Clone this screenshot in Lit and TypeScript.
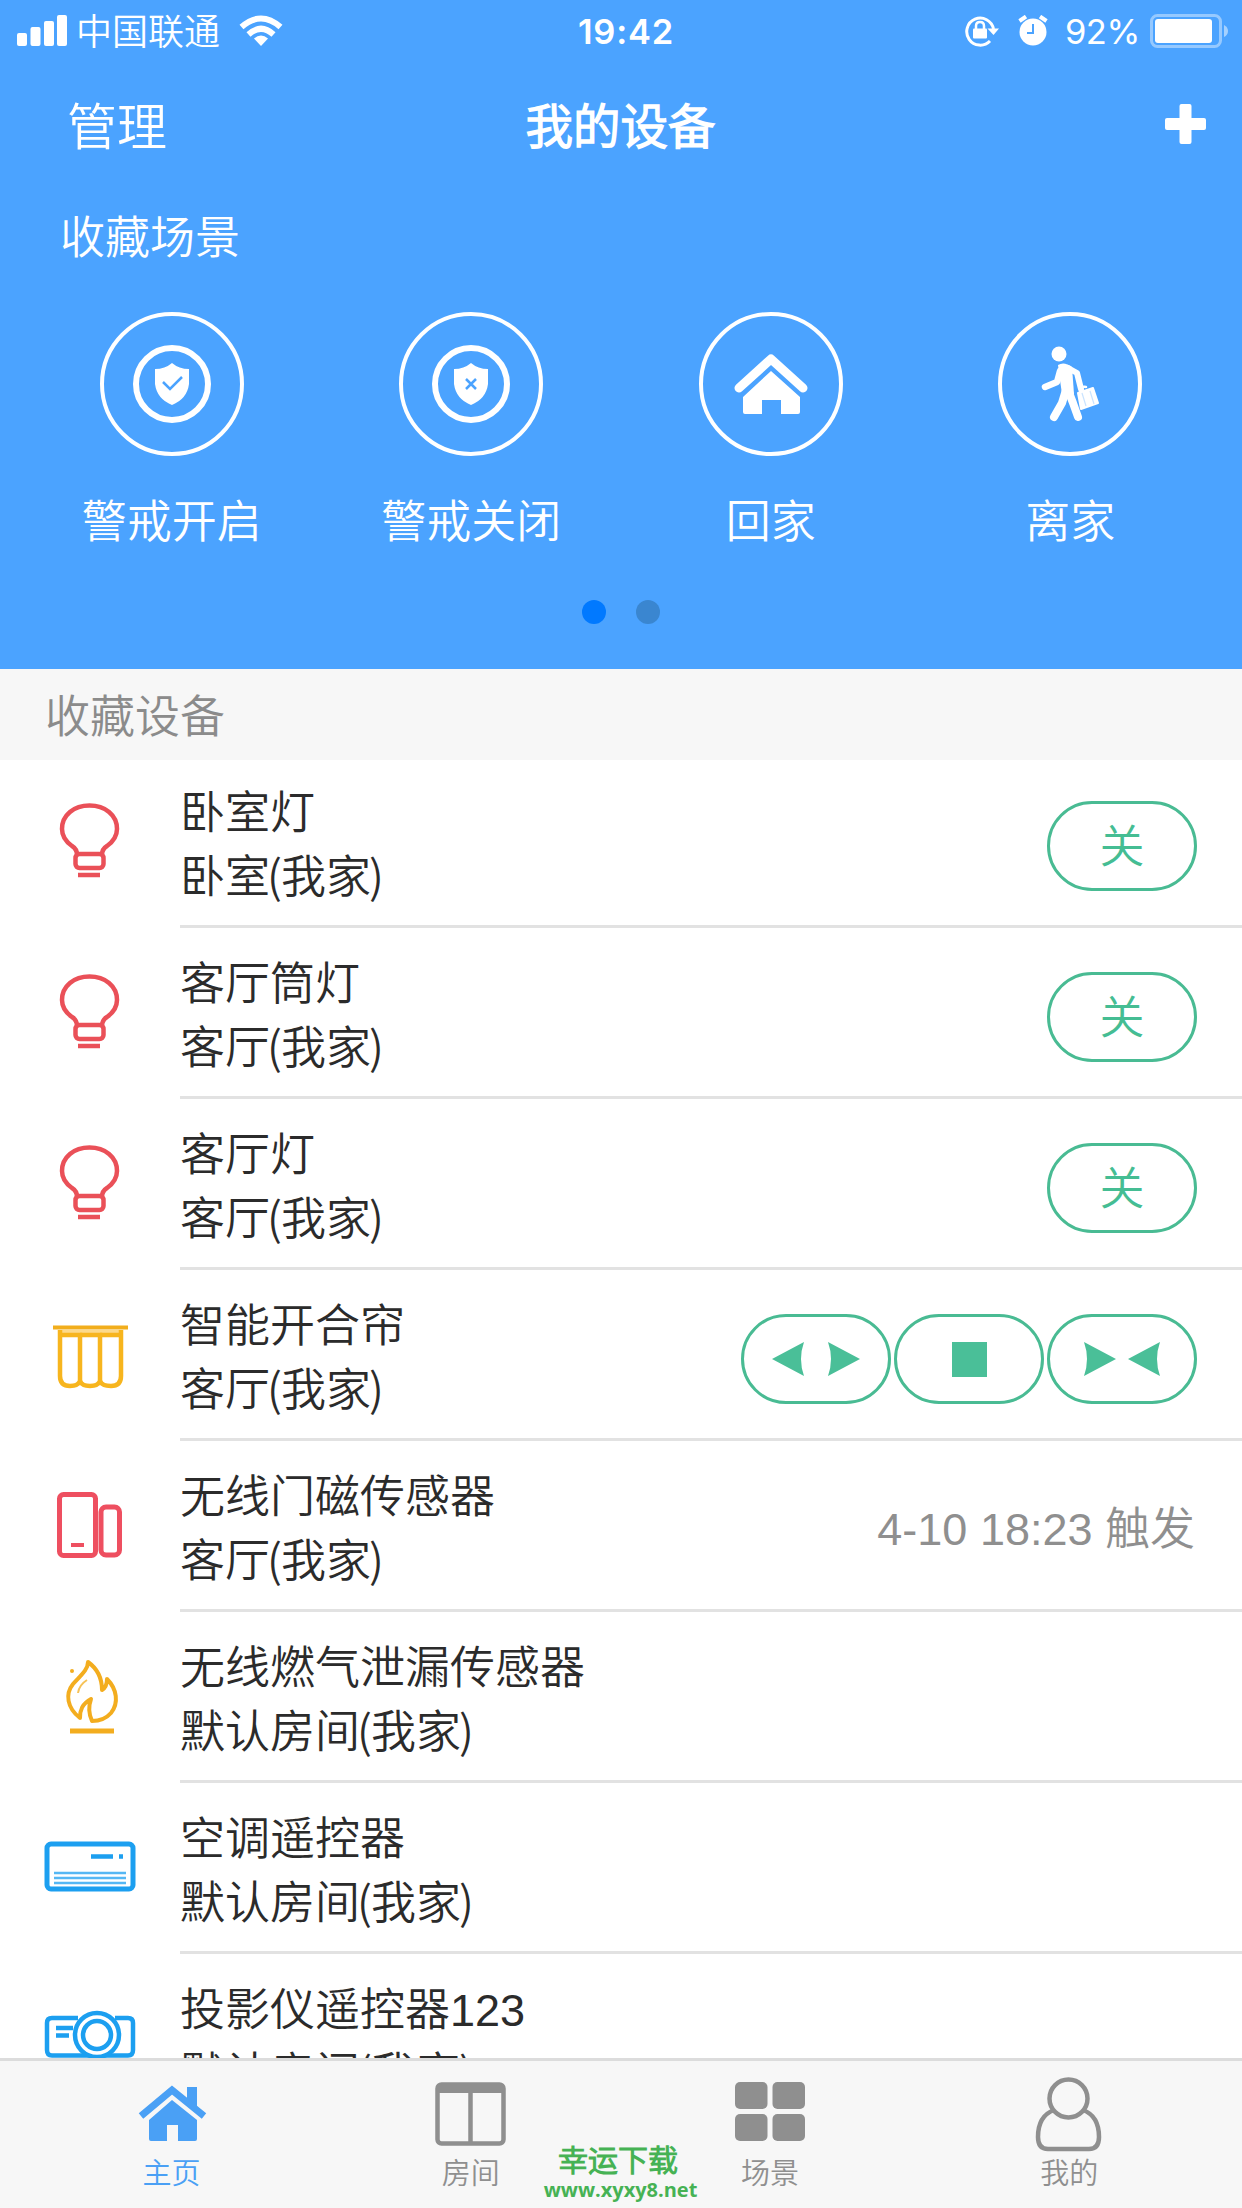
import { LitElement, html, svg, css, nothing } from "lit";
import { customElement, property } from "lit/decorators.js";
import { classMap } from "lit/directives/class-map.js";

const BLUE = "#4ba3ff";

const sceneArt: Record<string, unknown> = {
  armed: svg`
    <circle cx="72" cy="72" r="36" fill="none" stroke="#fff" stroke-width="6"/>
    <path d="M72 51 Q79 57 89 57 V72 Q87 87 72 93 Q57 87 55 72 V57 Q65 57 72 51Z" fill="#fff"/>
    <path d="M63 70 L70 77 L82 65" fill="none" stroke="${BLUE}" stroke-width="2.500"/>`,
  disarmed: svg`
    <circle cx="72" cy="72" r="36" fill="none" stroke="#fff" stroke-width="6"/>
    <path d="M72 51 Q79 57 89 57 V72 Q87 87 72 93 Q57 87 55 72 V57 Q65 57 72 51Z" fill="#fff"/>
    <path d="M67 67 L77 77 M77 67 L67 77" fill="none" stroke="${BLUE}" stroke-width="2.500"/>`,
  home: svg`
    <path d="M40 76 L72 47 L104 76" fill="none" stroke="#fff" stroke-width="9" stroke-linecap="round" stroke-linejoin="round"/>
    <path d="M72 59 L101 85 V100 Q101 102 99 102 H82 V88 H63 V102 H46 Q44 102 44 100 V85Z" fill="#fff"/>`,
  leave: svg`
    <g fill="none" stroke="#fff" stroke-linecap="round" stroke-linejoin="round">
      <path d="M62 59 L59 70 L47 75" stroke-width="6.500"/>
      <path d="M70 56 L79 61 L83 77" stroke-width="6"/>
      <path d="M68 78 L64 91 L56 105" stroke-width="8"/>
      <path d="M70 78 L75 91 L80 105" stroke-width="8"/>
      <path d="M82 79 Q83 74 88 75" stroke-width="2.500"/>
    </g>
    <circle cx="61" cy="42" r="7.500" fill="#fff"/>
    <path d="M60 53 Q66 49 74 55 L76 82 L64 82 L62 68Z" fill="#fff"/>
    <path d="M80 81 L95 76 L100 91 L83 97Z" fill="#fff" stroke="#fff" stroke-width="2" stroke-linejoin="round"/>
    <path d="M84 81 L88 94 M92 79 L96 92" stroke="${BLUE}" stroke-opacity=".3" stroke-width="1.200"/>`,
};

const deviceArt: Record<string, unknown> = {
  bulb: svg`
  <g fill="none" stroke="#ea5058" stroke-width="4.500">
    <path d="M35 91 Q35 85 30 82 C23 77 20 72 20 65 C20 51 32 41.500 47.500 41.500 C63 41.500 75 51 75 65 C75 72 72 77 65 82 Q60 85 60 91"/>
    <rect x="33.500" y="90" width="28" height="14" rx="4"/>
    <path d="M36 111 H58"/>
  </g>`,
  curtain: svg`
    <path d="M11 21.500 H86" stroke="#f2ae1c" stroke-width="4" />
    <rect x="17" y="24" width="64" height="6" fill="#fcd98a"/>
    <g fill="none" stroke="#f7b51e" stroke-width="4.500">
      <path d="M18 24 V70 Q18 80 28 80 Q36 80 38 75 V29 H18"/>
      <path d="M38 75 Q40 80 48 80 Q56 80 58 75 V29 H38"/>
      <path d="M58 75 Q60 80 69 80 Q79 80 79 70 V24 M58 29 H79"/>
    </g>`,
  sensor: svg`
    <g fill="none" stroke="#ee4f60" stroke-width="5">
      <rect x="17.500" y="17.500" width="36" height="61" rx="4"/>
      <rect x="59" y="30" width="18.500" height="48" rx="5"/>
      <path d="M29 68 H42" stroke-width="4"/>
    </g>`,
  flame: svg`
    <g fill="none" stroke="#f3ad1f" stroke-width="4" stroke-linejoin="round">
      <path d="M38 70 C25 60 23 46 31 36 C38 28 46 22 46 14 C53 19 60 27 60 42 Q65 39 65 31 C75 41 77 55 69 65 Q62 73 50 73 Q45 62 49 51 C40 56 38 62 38 70Z"/>
      <path d="M36 45 Q37 37 45 32" stroke-width="2" stroke-opacity=".75"/>
      <path d="M28 83 H72" stroke-width="5"/>
    </g>
    <circle cx="30" cy="23" r="2" fill="#f3ad1f"/>`,
  aircon: svg`
    <g fill="none" stroke="#1c9ff0">
      <rect x="5" y="25" width="86" height="45" rx="4" stroke-width="5"/>
      <path d="M49 37.500 H71 M77 37.500 H81" stroke-width="4.500"/>
      <g stroke-width="2.500" stroke-opacity=".75"><path d="M12 54 H84 M12 59 H84 M12 64 H84"/></g>
    </g>`,
  projector: svg`
    <g fill="none" stroke="#1c9ff0" stroke-width="4.500">
      <path d="M36 28 H10 Q5 28 5 33 V60 Q5 65.500 10 65.500 H86 Q91 65.500 91 60 V33 Q91 28 86 28 H73"/>
      <circle cx="55" cy="45" r="22" fill="#fff"/>
      <circle cx="55" cy="45" r="14"/>
      <path d="M14 38 H31 M14 45.500 H27"/>
    </g>`,
};

const tabArt: Record<string, unknown> = {
  home: svg`
    <path d="M55 28 V13 H65 V38Z" fill="#4aa0f5"/>
    <path d="M9 42 L40 16 L72 42" fill="none" stroke="#4aa0f5" stroke-width="7"/>
    <path d="M40 26 L65 46 V65 Q65 67 63 67 H46 V51 H35 V67 H19 Q17 67 17 65 V46Z" fill="#4aa0f5"/>`,
  room: svg`
    <rect x="6.500" y="10.500" width="66" height="59" rx="4" fill="none" stroke="#8f8f8f" stroke-width="4.500"/>
    <path d="M6 15 H73" stroke="#8f8f8f" stroke-width="8"/>
    <path d="M39.500 16 V68" stroke="#8f8f8f" stroke-width="4.500"/>`,
  scene: svg`
    <g fill="#8f8f8f">
      <rect x="5" y="8" width="32.500" height="27" rx="5"/>
      <rect x="42.500" y="8" width="32.500" height="27" rx="5"/>
      <rect x="5" y="40" width="32.500" height="27" rx="5"/>
      <rect x="42.500" y="40" width="32.500" height="27" rx="5"/>
    </g>`,
  me: svg`
    <g fill="none" stroke="#8f8f8f" stroke-width="4.500">
      <ellipse cx="39.500" cy="24.500" rx="19" ry="19"/>
      <path d="M25 36 Q9 42 9 63 Q9 75 19 75 H60 Q70 75 70 63 Q70 42 54 36"/>
    </g>`,
};

@customElement("status-bar")
class StatusBar extends LitElement {
  static styles = css`
    :host { display: grid; grid-template-columns: 1fr auto 1fr; align-items: center; height: 62px; padding: 0 14px 0 17px; box-sizing: border-box; }
    .side { display: flex; align-items: center; }
    .right { justify-content: flex-end; }
    .carrier { font-size: 36px; line-height: 40px; padding-top: 3px; margin: 0 19px 0 9px; }
    .time { font-size: 34.5px; line-height: 40px; font-weight: 600; font-family: Inter, "Liberation Sans", sans-serif; letter-spacing: 0.8px; margin-left: 7px; padding-top: 1px; }
    .pct { font-size: 34.5px; line-height: 40px; font-family: Inter, "Liberation Sans", sans-serif; font-weight: 400; letter-spacing: -0.4px; margin: 0 10px 0 17px; padding-top: 1px; }
    .lock { margin-right: 18px; }
    svg { display: block; }
  `;
  render() {
    return html`
      <div class="side">
        <svg width="50" height="32" viewBox="0 0 50 32" fill="#fff">
          <rect x="0" y="18" width="10" height="13" rx="2"/><rect x="13.500" y="12" width="10" height="19" rx="2"/>
          <rect x="27" y="6" width="10" height="25" rx="2"/><rect x="40" y="0" width="10" height="31" rx="2"/>
        </svg>
        <span class="carrier">中国联通</span>
        <svg width="44" height="32" viewBox="0 0 44 32">
          <g fill="none" stroke="#fff" stroke-width="6">
            <path d="M2.500 12 Q22 -5 41.500 12"/><path d="M9.500 19.500 Q22 8 34.500 19.500"/>
          </g>
          <path d="M15 23.500 Q22 17.500 29 23.500 L22 31Z" fill="#fff"/>
        </svg>
      </div>
      <span class="time">19:42</span>
      <div class="side right">
        <svg class="lock" width="36" height="32" viewBox="0 0 36 32">
          <path d="M26 26 A13.500 13.500 0 1 1 29.500 14" fill="none" stroke="#fff" stroke-width="3"/>
          <path d="M23.500 13.500 H35 L29.500 20Z" fill="#fff"/>
          <rect x="9" y="13.500" width="14" height="10" rx="1" fill="#fff"/>
          <path d="M12 14 V11 Q12 7 16 7 Q20 7 20 11 V14" fill="none" stroke="#fff" stroke-width="2.500"/>
        </svg>
        <svg width="30" height="32" viewBox="0 0 30 32">
          <circle cx="15" cy="17" r="13.500" fill="#fff"/>
          <path d="M1.500 6 L8 1.500 M28.500 6 L22 1.500" stroke="#fff" stroke-width="4"/>
          <path d="M15 9 V18 H9" fill="none" stroke="#4ba3ff" stroke-width="2"/>
        </svg>
        <span class="pct">92%</span>
        <svg width="78" height="34" viewBox="0 0 78 34">
          <rect x="1.500" y="1.500" width="69" height="31" rx="6" fill="none" stroke="#fff" stroke-opacity=".42" stroke-width="3"/>
          <rect x="5" y="5" width="57" height="24" rx="3" fill="#fff"/>
          <path d="M74 11 Q78 13 78 17 Q78 21 74 23Z" fill="#fff" fill-opacity=".5"/>
        </svg>
      </div>`;
  }
}

@customElement("scene-button")
class SceneButton extends LitElement {
  @property() icon = "";
  @property() label = "";
  static styles = css`
    :host { display: flex; flex-direction: column; align-items: center; gap: 37px; }
    svg { display: block; }
    .label { font-size: 45px; line-height: 60px; }
  `;
  render() {
    return html`
      <svg width="144" height="144" viewBox="0 0 144 144">
        <circle cx="72" cy="72" r="70" fill="none" stroke="#fff" stroke-width="4"/>
        ${sceneArt[this.icon]}
      </svg>
      <span class="label">${this.label}</span>`;
  }
}

interface Device {
  icon: string;
  name: string;
  room: string;
  control?: "switch" | "curtain";
  status?: string;
}

@customElement("device-row")
class DeviceRow extends LitElement {
  @property({ attribute: false }) device!: Device;
  static styles = css`
    :host { display: flex; height: 171px; padding-left: 42px; box-sizing: border-box; }
    .icon { display: block; flex: none; margin: 36px 42px 0 0; overflow: visible; }
    .icon.bulb { margin-top: 7px; }
    .body { flex: 1; display: flex; align-items: center; justify-content: space-between; padding: 9px 45px 0 0; border-bottom: 3px solid #e2e2e2; }
    .text { display: flex; flex-direction: column; font-size: 45px; line-height: 64px; color: #2b2b2b; white-space: nowrap; }
    .paren { font-family: "Noto Sans CJK SC", sans-serif; line-height: 0; }
    .open { margin: 0 -1px 0 -3px; }
    .close { margin-left: -2px; }
    .status { font-size: 45px; line-height: 64px; color: #8f8f8f; margin-right: 2px; white-space: nowrap; }
    .controls { display: flex; gap: 3px; }
    .pill { width: 150px; height: 90px; box-sizing: border-box; border: 3px solid #49bb93; border-radius: 45px; display: flex; align-items: center; justify-content: center; color: #45bd93; font-size: 45px; line-height: 64px; }
    .pill span { padding-top: 5px; }
    .pill svg { display: block; }
  `;
  private controls() {
    if (this.device.control === "switch") return html`<div class="controls"><div class="pill"><span>关</span></div></div>`;
    if (this.device.control === "curtain")
      return html`<div class="controls">
        <div class="pill"><svg width="90" height="36" viewBox="0 0 90 36" fill="#4abf98"><path d="M1 18 L33 1 Q27 18 33 35Z"/><path d="M89 18 L57 1 Q63 18 57 35Z"/></svg></div>
        <div class="pill"><svg width="36" height="36" viewBox="0 0 36 36" fill="#4abf98"><rect x="1" y="1" width="35" height="35"/></svg></div>
        <div class="pill"><svg width="80" height="36" viewBox="0 0 80 36" fill="#4abf98"><path d="M34 18 L2 1 Q8 18 2 35Z"/><path d="M46 18 L78 1 Q72 18 78 35Z"/></svg></div>
      </div>`;
    return this.device.status ? html`<span class="status">${this.device.status}</span>` : nothing;
  }
  render() {
    const d = this.device;
    const isBulb = d.icon === "bulb";
    return html`
      <svg class=${classMap({ icon: true, bulb: isBulb })} width="96" height=${isBulb ? 150 : 96} viewBox=${isBulb ? "0 0 96 150" : "0 0 96 96"}>${deviceArt[d.icon]}</svg>
      <div class="body">
        <div class="text">
          <span>${d.name}</span>
          <span>${d.room}<span class="paren open">(</span>我家<span class="paren close">)</span></span>
        </div>
        ${this.controls()}
      </div>`;
  }
}

@customElement("tab-item")
class TabItem extends LitElement {
  @property() icon = "";
  @property() label = "";
  @property({ type: Boolean }) active = false;
  static styles = css`
    :host { display: flex; flex-direction: column; align-items: center; padding-top: 13px; }
    svg { display: block; }
    .label { font-size: 29px; line-height: 40px; color: #8f8f8f; }
    .active { color: #4aa0f5; }
  `;
  render() {
    return html`
      <svg width="80" height="80" viewBox="0 0 80 80">${tabArt[this.icon]}</svg>
      <span class=${classMap({ label: true, active: this.active })}>${this.label}</span>`;
  }
}

const devices: Device[] = [
  { icon: "bulb", name: "卧室灯", room: "卧室", control: "switch" },
  { icon: "bulb", name: "客厅筒灯", room: "客厅", control: "switch" },
  { icon: "bulb", name: "客厅灯", room: "客厅", control: "switch" },
  { icon: "curtain", name: "智能开合帘", room: "客厅", control: "curtain" },
  { icon: "sensor", name: "无线门磁传感器", room: "客厅", status: "4-10 18:23 触发" },
  { icon: "flame", name: "无线燃气泄漏传感器", room: "默认房间" },
  { icon: "aircon", name: "空调遥控器", room: "默认房间" },
  { icon: "projector", name: "投影仪遥控器123", room: "默认房间" },
];

@customElement("app-root")
class AppRoot extends LitElement {
  static styles = css`
    :host { display: flex; flex-direction: column; position: relative; width: 1242px; height: 2208px; overflow: hidden; background: #fff; font-family: "Liberation Sans", "Noto Sans CJK SC DemiLight", "Noto Sans CJK SC", sans-serif; font-weight: 350; }
    .hero { flex: none; height: 669px; background: #4ba3ff; color: #fff; }
    .nav { display: grid; grid-template-columns: 1fr auto 1fr; align-items: center; height: 128px; padding: 0 36px 0 67px; line-height: 70px; }
    .manage { font-size: 50px; padding-top: 4px; }
    .title { font-size: 47.5px; font-weight: 700; margin-right: 32px; padding-top: 4px; }
    .add { justify-self: end; display: block; margin-bottom: 4px; }
    .caption { font-size: 45px; line-height: 97px; height: 92px; padding-left: 60px; }
    .scenes { display: grid; grid-template-columns: repeat(4, 1fr); padding: 30px 22px 0; }
    .dots { display: flex; justify-content: center; gap: 30px; margin-top: 47px; }
    .dot { width: 24px; height: 24px; border-radius: 50%; background: #3a86d0; }
    .dot.on { background: #0179ff; }
    .section { flex: none; height: 91px; line-height: 98px; background: #f7f7f7; color: #8b8b8b; font-size: 45px; padding-left: 45px; box-sizing: border-box; }
    .list { flex: 1; min-height: 0; overflow: hidden; margin-top: -3px; }
    .tabs { flex: none; height: 150px; box-sizing: border-box; display: grid; grid-template-columns: repeat(4, 1fr); padding: 0 23px 0 22px; background: #f7f7f7; border-top: 3px solid #dcdcdc; }
    .mark { position: absolute; left: 544px; bottom: 0; width: 153px; height: 66px; display: flex; flex-direction: column; align-items: center; color: #46b254; font-weight: 700; white-space: nowrap; }
    .mark-name { font-size: 30px; line-height: 37px; margin-right: 5px; }
    .mark-url { font-family: "Open Sans", sans-serif; font-size: 20px; line-height: 22px; }
  `;
  render() {
    return html`
      <header class="hero">
        <status-bar></status-bar>
        <div class="nav">
          <span class="manage">管理</span>
          <span class="title">我的设备</span>
          <svg class="add" width="41" height="42" viewBox="0 0 41 42" fill="#fff"><rect x="14.500" y="1" width="12" height="40" rx="2"/><rect x="0" y="15" width="41" height="12" rx="2"/></svg>
        </div>
        <div class="caption">收藏场景</div>
        <div class="scenes">
          <scene-button icon="armed" label="警戒开启"></scene-button>
          <scene-button icon="disarmed" label="警戒关闭"></scene-button>
          <scene-button icon="home" label="回家"></scene-button>
          <scene-button icon="leave" label="离家"></scene-button>
        </div>
        <div class="dots"><span class="dot on"></span><span class="dot"></span></div>
      </header>
      <div class="section">收藏设备</div>
      <main class="list">${devices.map((d) => html`<device-row .device=${d}></device-row>`)}</main>
      <nav class="tabs">
        <tab-item icon="home" label="主页" active></tab-item>
        <tab-item icon="room" label="房间"></tab-item>
        <tab-item icon="scene" label="场景"></tab-item>
        <tab-item icon="me" label="我的"></tab-item>
      </nav>
      <div class="mark"><span class="mark-name">幸运下载</span><span class="mark-url">www.xyxy8.net</span></div>`;
  }
}
